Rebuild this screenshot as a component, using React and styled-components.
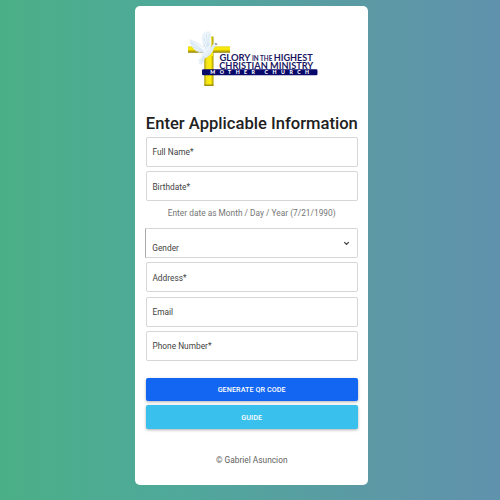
import React from "react";
import styled, { createGlobalStyle } from "styled-components";

const GlobalStyle = createGlobalStyle`
  * { box-sizing: border-box; }
  body { margin: 0; font-family: Roboto, "Liberation Sans", sans-serif; }
`;

const Page = styled.main`
  display: flex;
  justify-content: center;
  align-items: flex-start;
  height: 500px;
  padding: 6.2px 0 0 3px;
  overflow: hidden;
  background: linear-gradient(90deg, #4aaf86 0%, #4fa99a 34%, #5b9aa4 72%, #6092ad 100%);
`;

const Card = styled.section`
  display: flex;
  flex-direction: column;
  width: 232.6px;
  height: 479.2px;
  padding: 20px 10.2px 0 10.6px;
  border-radius: 5px;
  background: #fff;
`;

const Logo = styled.svg`
  display: block;
  align-self: center;
  width: 140px;
  height: 64px;
  flex: none;
`;

const Title = styled.h1`
  margin: 23px 0 3px;
  height: 21px;
  font-size: 16.6px;
  line-height: 21px;
  font-weight: 500;
  color: #212121;
  text-align: center;
  white-space: nowrap;
`;

const Fields = styled.div`
  display: flex;
  flex-direction: column;
  gap: 4.3px;
`;

const Field = styled.label`
  display: flex;
  align-items: center;
  justify-content: space-between;
  height: 30px;
  margin-left: ${(p) => (p.$select ? "-0.6px" : "0")};
  padding: ${(p) => (p.$select ? "0 7px 0 6px" : "0 5.6px")};
  border: 1px solid #d6d6d6;
  border-left-color: ${(p) => (p.$select ? "#aaa" : "#d6d6d6")};
  border-radius: ${(p) => (p.$select ? "0 2px 2px 0" : "2px")};
`;

const Label = styled.span`
  font-size: 8.3px;
  line-height: 10px;
  letter-spacing: 0.03px;
  color: #424242;
  padding-top: ${(p) => (p.$low ? "10px" : "0.3px")};
`;

const Chevron = styled.svg`
  width: 7px;
  height: 5px;
`;

const Hint = styled.p`
  margin: 7px 0 9.7px;
  height: 10px;
  font-size: 8.3px;
  line-height: 10px;
  letter-spacing: 0.02px;
  color: #757575;
  text-align: center;
  white-space: nowrap;
`;

const Actions = styled.div`
  display: flex;
  flex-direction: column;
  gap: 4px;
  margin-top: 16.7px;
`;

const Button = styled.button`
  height: 23.5px;
  padding: ${(p) => (p.$info ? "2px" : "1px")} 0 0;
  border: 0;
  border-radius: 2px;
  background: ${(p) => (p.$info ? "#39c0ed" : "#1266f1")};
  box-shadow: 0 1px 3px rgba(0, 0, 0, 0.32);
  color: #fff;
  font: 500 7.2px/10px Roboto, sans-serif;
  letter-spacing: 0.08px;
  text-transform: uppercase;
`;

const Footer = styled.footer`
  margin-top: 26px;
  font-size: 8.3px;
  line-height: 10px;
  letter-spacing: 0.02px;
  color: #616161;
  text-align: center;
`;

const Wordmark = styled.text`
  font-family: Lato, sans-serif;
  font-weight: 700;
  fill: #1b1762;
`;

const ChurchLogo = () => (
  <Logo viewBox="182 26 140 64" role="img" aria-label="Glory in the Highest Christian Ministry">
    <defs>
      <linearGradient id="beam" x1="0" x2="1">
        <stop offset="0" stopColor="#a89800" />
        <stop offset=".25" stopColor="#f4e31b" />
        <stop offset=".7" stopColor="#ffef08" />
        <stop offset="1" stopColor="#a69500" />
      </linearGradient>
      <linearGradient id="arm" x1="0" x2="0" y1="0" y2="1">
        <stop offset="0" stopColor="#e8da25" />
        <stop offset=".45" stopColor="#ffed00" />
        <stop offset="1" stopColor="#8d7b00" />
      </linearGradient>
      <linearGradient id="feather" x1="0" x2="1" y1="0" y2="1">
        <stop offset="0" stopColor="#d7e8f4" />
        <stop offset=".5" stopColor="#f5faff" />
        <stop offset="1" stopColor="#bfd4e8" />
      </linearGradient>
    </defs>
    <path d="M204.3 52h9.2v33.7h-9.2zM209.5 36.5h4V52h-4z" fill="url(#beam)" />
    <path d="M188 46.3h42v6.4h-42z" fill="url(#arm)" />
    <path d="M205 49h8v7h-8z" fill="#fae905" />
    <path d="M204.5 85.2h9" stroke="#8d7b00" strokeWidth="1.2" />
    <path d="M217.5 44.2c-1.6-1.9-4-1.1-5 1l-1.7 2.8c1-5.5.6-12-1.3-17l-1.3 2-1.2-1.6-.8 2-1.7-1-.2 2.3-1.6-.4.5 2.7-1.3.1 1.2 3.2-1 .5 1.9 2.8-.2 3.3c-3.8-3-8.3-5.2-13.8-7.4l.7 2.1-1.1.2 1.5 2-.7.5 2 1.8-.8.6 2.4 1.6-.8.8 2.7 1.1-.5.9 3.2.5-.3.8 4.5-.1-.8 4.2-3.5 4.3 1.3.3-.4 2.9 1.5-.7.2 1.4 2.2-2.4 1.4-4c4.6-1.6 7.9-5.4 9-10l1.5-1.8z" fill="url(#feather)" stroke="#d1e1ed" strokeWidth=".3" />
    <path d="M209.1 34l-.5 12M206.5 35l1.3 12M204 38l2.9 9M203.2 43l3 6M191 43l11.5 7M193.5 47l9 4M196 50.5l8 1.5M204 56l-2 5" fill="none" stroke="#a9c7de" strokeWidth=".4" />
    <path d="M214.8 43.2l3 .8-2.1.8z" fill="#4d5358" />
    <Wordmark x="219.4" y="61.4" fontSize="10" textLength="31" lengthAdjust="spacingAndGlyphs">GLORY</Wordmark>
    <Wordmark x="252" y="61.4" fontSize="7" textLength="20.3" lengthAdjust="spacingAndGlyphs">IN THE</Wordmark>
    <Wordmark x="273.7" y="61.4" fontSize="10" textLength="39" lengthAdjust="spacingAndGlyphs">HIGHEST</Wordmark>
    <Wordmark x="219.3" y="69.3" fontSize="10" textLength="94" lengthAdjust="spacingAndGlyphs">CHRISTIAN MINISTRY</Wordmark>
    <rect x="202" y="69.3" width="115.5" height="5.9" rx="1.3" fill="#09096b" />
    <text x="210.3" y="74.1" fill="#fff" fontFamily="Lato, sans-serif" fontWeight="900" fontSize="5.2" textLength="44.5" lengthAdjust="spacing">MOTHER</text>
    <text x="264.6" y="74.1" fill="#fff" fontFamily="Lato, sans-serif" fontWeight="900" fontSize="5.2" textLength="44.5" lengthAdjust="spacing">CHURCH</text>
  </Logo>
);

export default function App() {
  return (
    <>
      <GlobalStyle />
      <Page>
        <Card>
          <ChurchLogo />
          <Title>Enter Applicable Information</Title>
          <Fields>
            <Field><Label>Full Name*</Label></Field>
            <Field><Label>Birthdate*</Label></Field>
          </Fields>
          <Hint>Enter date as Month / Day / Year (7/21/1990)</Hint>
          <Fields>
            <Field $select>
              <Label $low>Gender</Label>
              <Chevron viewBox="0 0 7 5" aria-hidden="true">
                <path d="M1.2 1.1l2.3 2.2 2.3-2.2" fill="none" stroke="#444" strokeWidth="1.2" />
              </Chevron>
            </Field>
            <Field><Label>Address*</Label></Field>
            <Field><Label>Email</Label></Field>
            <Field><Label>Phone Number*</Label></Field>
          </Fields>
          <Actions>
            <Button type="button">Generate QR code</Button>
            <Button type="button" $info>Guide</Button>
          </Actions>
          <Footer>© Gabriel Asuncion</Footer>
        </Card>
      </Page>
    </>
  );
}
